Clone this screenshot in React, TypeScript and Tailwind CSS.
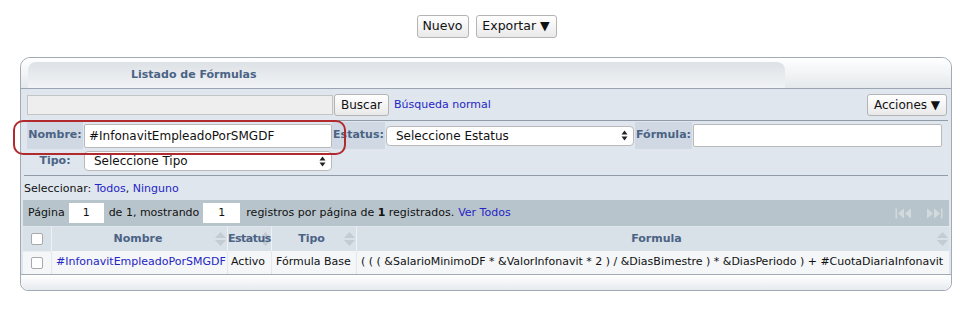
import React from "react";

const font = { fontFamily: '"DejaVu Sans", Verdana, sans-serif' };

function SortArrows() {
  return (
    <svg width="13" height="18" viewBox="0 0 13 18" className="shrink-0">
      <path d="M1 8 L6.5 2 L12 8 Z" fill="#c3cbd3" />
      <path d="M1 10 L6.5 16 L12 10 Z" fill="#c3cbd3" />
    </svg>
  );
}

function SelectArrows() {
  return (
    <svg width="7" height="11" viewBox="0 0 7 11" className="shrink-0">
      <path d="M0.5 4.5 L3.5 0.5 L6.5 4.5 Z" fill="#222" />
      <path d="M0.5 6.5 L3.5 10.5 L6.5 6.5 Z" fill="#222" />
    </svg>
  );
}

function FakeSelect({ label, width }: { label: string; width: string }) {
  return (
    <div
      className={`${width} h-[20px] bg-white border border-[#b9b9b9] rounded-[4px] flex items-center pl-[9px] pr-[5px] text-[12px] text-[#111]`}
    >
      <span className="flex-1">{label}</span>
      <SelectArrows />
    </div>
  );
}

function MacButton({ children, className = "" }: { children: React.ReactNode; className?: string }) {
  return (
    <button
      className={`h-[23px] text-[12.5px] text-[#111] border border-[#b4b4b4] rounded-[3px] bg-gradient-to-b from-[#ffffff] to-[#e9e9e9] leading-none whitespace-nowrap ${className}`}
    >
      {children}
    </button>
  );
}

const labelCls =
  "bg-[#d0d9e3] text-[#4b6385] font-bold text-[11px] flex items-center justify-center";

export default function App() {
  return (
    <div className="w-[973px] h-[316px] bg-white text-[11px] text-[#111]" style={font}>
      {/* botones superiores */}
      <div className="flex justify-center gap-[7px] pt-[15px]">
        <MacButton className="w-[52px]">Nuevo</MacButton>
        <MacButton className="w-[81px]">Exportar ▼</MacButton>
      </div>

      {/* panel */}
      <div className="relative ml-[20px] mt-[19px] w-[932px] border border-[#a2abb5] rounded-t-[10px] rounded-b-[8px]">
        {/* cabecera con pestaña */}
        <div className="h-[30px] rounded-t-[10px] bg-gradient-to-b from-[#ffffff] to-[#e5e9ec] flex items-end">
          <div className="ml-[7px] w-[757px] h-[26px] rounded-t-[8px] bg-gradient-to-b from-[#dde2e6] to-[#f1f3f5] flex items-center pl-[103px]">
            <span className="font-bold text-[11px] text-[#4b6385]">Listado de Fórmulas</span>
          </div>
        </div>
        <div className="h-px bg-[#9aa5b1]" />

        <div className="bg-[#dfe6ee] px-[2px]">
          {/* búsqueda */}
          <div className="flex items-center pt-[4px] pl-[4px] pr-[2px] h-[28px]">
            <div className="w-[306px] h-[20px] bg-[#eeeeee] border border-[#c4c4c4]" />
            <button className="ml-[1px] h-[22px] px-[6px] text-[12px] text-[#111] border border-[#b4b4b4] rounded-[3px] bg-gradient-to-b from-[#ffffff] to-[#e9e9e9]">
              Buscar
            </button>
            <span className="ml-[5px] text-[#2525c5]">Búsqueda normal</span>
            <button className="ml-auto h-[22px] w-[80px] text-[12px] text-[#111] border border-[#b4b4b4] rounded-[3px] bg-gradient-to-b from-[#ffffff] to-[#e9e9e9] whitespace-nowrap">
              Acciones ▼
            </button>
          </div>
          <div className="mx-[1px] mt-[3px] h-px bg-[#8f9ba7]" />

          {/* filtros */}
          <div className="relative pl-[4px] pt-[1px]">
            <div className="grid grid-cols-[56px_249px_53px_250px_57px_250px] grid-rows-[27px_20px] gap-y-[2px]">
              <div className={labelCls}>Nombre:</div>
              <div className="flex items-center pl-[1px]">
                <div className="w-[248px] h-[24px] bg-white border border-[#b9b9b9] rounded-[2px] flex items-center pl-[4px] text-[12px]">
                  #InfonavitEmpleadoPorSMGDF
                </div>
              </div>
              <div className={labelCls}>Estatus:</div>
              <div className="flex items-center pl-[1px]">
                <FakeSelect label="Seleccione Estatus" width="w-[248px]" />
              </div>
              <div className={labelCls}>Fórmula:</div>
              <div className="flex items-center pl-[1px]">
                <div className="w-[249px] h-[23px] bg-white border border-[#b9b9b9] rounded-[2px]" />
              </div>

              <div className="text-[#4b6385] font-bold text-[11px] flex items-center justify-center">Tipo:</div>
              <div className="flex items-center pl-[1px]">
                <FakeSelect label="Seleccione Tipo" width="w-[248px]" />
              </div>
            </div>
            {/* resaltado */}
            <div className="absolute left-[-10px] top-[-1px] w-[333px] h-[35px] border-[2.5px] border-[#b02a2e] rounded-[10px] pointer-events-none" />
          </div>
          <div className="mx-[1px] mt-[4px] h-px bg-[#8f9ba7]" />

          <div className="h-[24px] flex items-end pl-[1px] pb-[3px]">
            Seleccionar:&nbsp;<span className="text-[#2525c5]">Todos</span>,&nbsp;<span className="text-[#2525c5]">Ninguno</span>
          </div>

          {/* paginador */}
          <div className="h-[26px] bg-[#b8c4cb] flex items-center pl-[5px] pr-[3px]">
            <span>Página</span>
            <div className="ml-[4px] w-[35px] h-[20px] bg-white flex items-center justify-center">1</div>
            <span className="ml-[5px]">de 1, mostrando</span>
            <div className="ml-[4px] w-[37px] h-[20px] bg-white flex items-center justify-center">1</div>
            <span className="ml-[6px]">
              registros por página de <b>1</b> registrados.
            </span>
            <span className="ml-[4px] text-[#2525c5]">Ver Todos</span>
            <div className="ml-auto flex items-center gap-[14px] pr-[3px]">
              <svg width="17" height="11" viewBox="0 0 17 11">
                <rect x="0.5" y="0.5" width="1.5" height="10" fill="#d3dade" />
                <path d="M9 0.5 L3 5.5 L9 10.5 Z" fill="#d3dade" />
                <path d="M16 0.5 L10 5.5 L16 10.5 Z" fill="#d3dade" />
              </svg>
              <svg width="17" height="11" viewBox="0 0 17 11">
                <path d="M1 0.5 L7 5.5 L1 10.5 Z" fill="#d3dade" />
                <path d="M8 0.5 L14 5.5 L8 10.5 Z" fill="#d3dade" />
                <rect x="15" y="0.5" width="1.5" height="10" fill="#d3dade" />
              </svg>
            </div>
          </div>

          {/* tabla */}
          <div className="grid grid-cols-[29px_176px_44px_85px_1fr] mt-px">
            <div className="h-[24px] bg-[#d8e0e8] border-r border-[#eef2f6] flex items-center justify-center">
              <div className="w-[12px] h-[12px] bg-white border border-[#a9a9a9] rounded-[2px]" />
            </div>
            <div className="h-[24px] bg-[#d8e0e8] border-r border-[#eef2f6] flex items-center">
              <span className="flex-1 text-center font-bold text-[#4b6385] pl-[10px]">Nombre</span>
              <SortArrows />
            </div>
            <div className="h-[24px] bg-[#d8e0e8] border-r border-[#eef2f6] flex items-center relative">
              <div className="absolute right-[-1px] top-[3px]">
                <SortArrows />
              </div>
              <span className="relative font-bold text-[#4b6385] whitespace-nowrap tracking-[-0.5px]">Estatus</span>
            </div>
            <div className="h-[24px] bg-[#d8e0e8] border-r border-[#eef2f6] flex items-center">
              <span className="flex-1 text-center font-bold text-[#4b6385] pl-[8px]">Tipo</span>
              <SortArrows />
            </div>
            <div className="h-[24px] bg-[#d8e0e8] flex items-center">
              <span className="flex-1 text-center font-bold text-[#4b6385] pl-[20px]">Formula</span>
              <SortArrows />
            </div>

            <div className="h-[23px] bg-[#f4f6f8] border-r border-[#e3e8ee] border-t border-t-[#e9eef3] flex items-center justify-center">
              <div className="w-[12px] h-[12px] bg-white border border-[#a9a9a9] rounded-[2px]" />
            </div>
            <div className="h-[23px] bg-[#f4f6f8] border-r border-[#e3e8ee] flex items-center pl-[4px] text-[#2525c5] whitespace-nowrap">
              #InfonavitEmpleadoPorSMGDF
            </div>
            <div className="h-[23px] bg-[#f4f6f8] border-r border-[#e3e8ee] flex items-center pl-[3px]">Activo</div>
            <div className="h-[23px] bg-[#f4f6f8] border-r border-[#e3e8ee] flex items-center pl-[4px] whitespace-nowrap">
              Fórmula Base
            </div>
            <div className="h-[23px] bg-[#f4f6f8] flex items-center pl-[4px] whitespace-nowrap overflow-hidden">
              ( ( ( &amp;SalarioMinimoDF * &amp;ValorInfonavit * 2 ) / &amp;DiasBimestre ) * &amp;DiasPeriodo ) + #CuotaDiariaInfonavit
            </div>
          </div>
        </div>
        <div className="h-px bg-[#a2abb5]" />
        <div className="h-[15px] rounded-b-[8px] bg-gradient-to-b from-[#ffffff] to-[#e6eaee]" />
      </div>
    </div>
  );
}
